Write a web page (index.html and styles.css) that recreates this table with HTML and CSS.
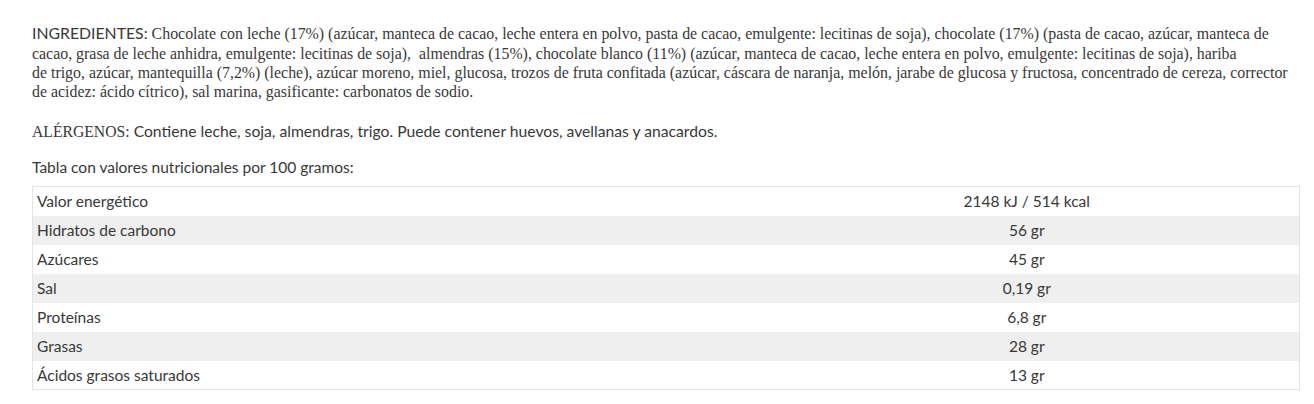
FILE: index.html
```html
<!DOCTYPE html>
<html lang="es">
<head>
<meta charset="utf-8">
<link rel="stylesheet" href="styles.css">
</head>
<body>
<div class="info">
  <p class="ingredients"><span class="label">INGREDIENTES:</span> Chocolate con leche (17%) (azúcar, manteca de cacao, leche entera en polvo, pasta de cacao, emulgente: lecitinas de soja), chocolate (17%) (pasta de cacao, azúcar, manteca de cacao, grasa de leche anhidra, emulgente: lecitinas de soja),&nbsp; almendras (15%), chocolate blanco (11%) (azúcar, manteca de cacao, leche entera en polvo, emulgente: lecitinas de soja), hariba<br>de trigo, azúcar, mantequilla (7,2%) (leche), azúcar moreno, miel, glucosa, trozos de fruta confitada (azúcar, cáscara de naranja, melón, jarabe de glucosa y fructosa, concentrado de cereza, corrector de acidez: ácido cítrico), sal marina, gasificante: carbonatos de sodio.</p>
  <p class="allergens"><span class="serif">ALÉRGENOS:</span> Contiene leche, soja, almendras, trigo. Puede contener huevos, avellanas y anacardos.</p>
  <p class="intro">Tabla con valores nutricionales por 100 gramos:</p>
  <table class="nutrition">
    <tbody>
      <tr><td class="name">Valor energético</td><td class="value">2148 kJ / 514 kcal</td></tr>
      <tr><td class="name">Hidratos de carbono</td><td class="value">56 gr</td></tr>
      <tr><td class="name">Azúcares</td><td class="value">45 gr</td></tr>
      <tr><td class="name">Sal</td><td class="value">0,19 gr</td></tr>
      <tr><td class="name">Proteínas</td><td class="value">6,8 gr</td></tr>
      <tr><td class="name">Grasas</td><td class="value">28 gr</td></tr>
      <tr><td class="name">Ácidos grasos saturados</td><td class="value">13 gr</td></tr>
    </tbody>
  </table>
</div>
</body>
</html>
```

FILE: styles.css
```css
html, body {
  margin: 0;
  padding: 0;
  background: #ffffff;
}
body {
  color: #383838;
  font-family: "Lato", "Liberation Sans", sans-serif;
  font-size: 15.5px;
}
.info {
  padding: 22px 14px 0 32px;
}
.ingredients {
  margin: 0;
  font-family: "Liberation Serif", serif;
  font-size: 15.9px;
  line-height: 19px;
}
.ingredients .label {
  font-family: "Lato", "Liberation Sans", sans-serif;
  font-size: 15.8px;
  line-height: 22px;
}
.allergens {
  margin: 20px 0 0;
  line-height: 20px;
  font-size: 15.7px;
}
.allergens .serif {
  font-family: "Liberation Serif", serif;
  font-size: 15.7px;
}
.intro {
  margin: 15px 0 0;
  line-height: 20px;
}
.nutrition {
  margin-top: 9px;
  width: 1268px;
  border-collapse: collapse;
  border: 1px solid #e4e4e4;
}
.nutrition td {
  height: 29px;
  padding: 0 4px;
  box-sizing: border-box;
  line-height: 20px;
}
.nutrition tr:nth-child(even) td {
  background: #efefef;
}
.nutrition .name {
  width: 722px;
  text-align: left;
}
.nutrition .value {
  text-align: center;
}
```
